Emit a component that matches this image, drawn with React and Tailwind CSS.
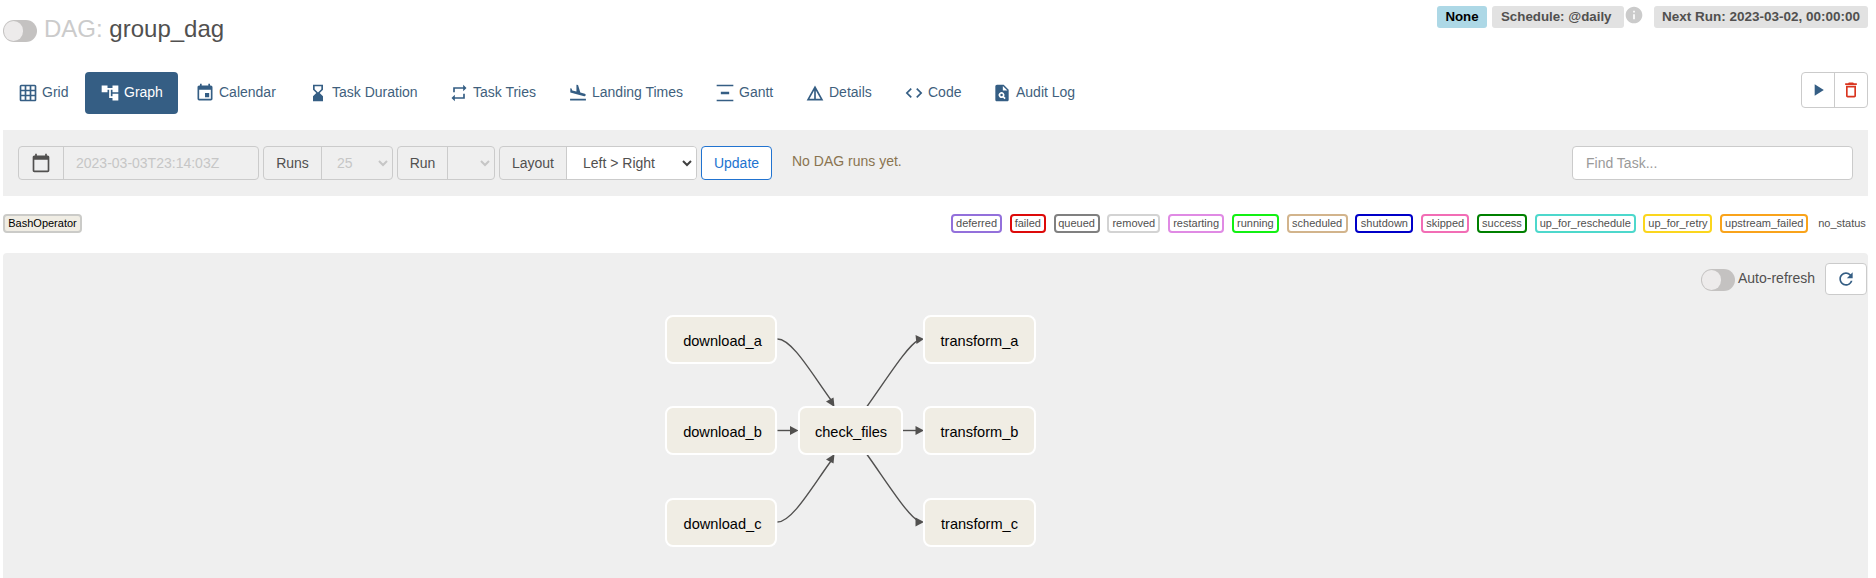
import React from "react";
import {
  MdGridOn, MdAccountTree, MdEvent, MdHourglassBottom, MdRepeat, MdFlightLand,
  MdVerticalDistribute, MdDetails, MdCode, MdPlagiarism, MdPlayArrow,
  MdDeleteOutline, MdRefresh, MdInfo,
} from "react-icons/md";

const tabs = [
  ["Grid", MdGridOn, "w-[80px]"],
  ["Graph", MdAccountTree, "w-[93px]"],
  ["Calendar", MdEvent, "w-[111px]"],
  ["Task Duration", MdHourglassBottom, "w-[139px]"],
  ["Task Tries", MdRepeat, "w-[117px]"],
  ["Landing Times", MdFlightLand, "w-[145px]"],
  ["Gantt", MdVerticalDistribute, "w-[88px]"],
  ["Details", MdDetails, "w-[97px]"],
  ["Code", MdCode, "w-[86px]"],
  ["Audit Log", MdPlagiarism, "w-[113px]"],
];

const states = [
  ["deferred", "w-[51px] border-[#9370db]"],
  ["failed", "w-[36px] border-[#dd0a0a]"],
  ["queued", "w-[46px] border-[#808080]"],
  ["removed", "w-[53px] border-[#d3d3d3]"],
  ["restarting", "w-[56px] border-[#e08ae4]"],
  ["running", "w-[47px] border-[#13f013]"],
  ["scheduled", "w-[61px] border-[#d2b48c]"],
  ["shutdown", "w-[58px] border-[#0000c8]"],
  ["skipped", "w-[48px] border-[#f26db5]"],
  ["success", "w-[50px] border-[#008000]"],
  ["up_for_reschedule", "w-[101px] border-[#4dd8cc]"],
  ["up_for_retry", "w-[69px] border-[#fbd61e]"],
  ["upstream_failed", "w-[88px] border-[#f9a31b]"],
  ["no_status", "w-[52px] border-transparent"],
];

const nodes = [
  ["download_a", "left-[662px] top-[62px] w-[112px] pl-[3px]"],
  ["download_b", "left-[662px] top-[153px] w-[112px] pl-[3px]"],
  ["download_c", "left-[662px] top-[245px] w-[112px] pl-[3px]"],
  ["check_files", "left-[795px] top-[153px] w-[105px] pl-px"],
  ["transform_a", "left-[920px] top-[62px] w-[113px]"],
  ["transform_b", "left-[920px] top-[153px] w-[113px]"],
  ["transform_c", "left-[920px] top-[245px] w-[113px]"],
];

function Toggle() {
  return (
    <span className="flex h-[22px] w-[34px] shrink-0 items-center rounded-full bg-[#c4c2c1] pl-px">
      <span className="h-5 w-[19px] rounded-full bg-[#edebeb]" />
    </span>
  );
}

function CalendarIcon() {
  return (
    <svg width="20" height="20" viewBox="0 0 24 24" fill="currentColor">
      <path d="M20 3h-1V1h-2v2H7V1H5v2H4c-1.100 0-2 .9-2 2v16c0 1.100.9 2 2 2h16c1.100 0 2-.9 2-2V5c0-1.100-.9-2-2-2zm0 18H4V8h16v13z" />
    </svg>
  );
}

function Chevron({ className }) {
  return (
    <svg className={className} width="10" height="7" viewBox="0 0 10 7" fill="none" stroke="currentColor" strokeWidth="2">
      <path d="M1 1l4 4 4-4" />
    </svg>
  );
}

function Field({ label, width, labelWidth, children }) {
  return (
    <div className={`flex h-[34px] overflow-hidden rounded border border-[#cbcbcb] ${width}`}>
      <div className={`flex items-center justify-center border-r border-[#cbcbcb] ${labelWidth}`}>{label}</div>
      {children}
    </div>
  );
}

function Edges() {
  return (
    <svg className="absolute left-0 top-0" width="1100" height="325" viewBox="3 253 1100 325" fill="none" stroke="#51504f" strokeWidth="1.4">
      <path d="M777.5 339C792 339 812 374 831 400" />
      <path d="M777.5 430.5H792" />
      <path d="M777.5 522C792 522 812 487 831 461" />
      <path d="M867 406.5C886 380 908 345 918 340.5" />
      <path d="M903 430.5H918" />
      <path d="M867 454.5C886 481 908 516 918 520.5" />
      <g fill="#51504f" stroke="none">
        <path d="M834.5 407L826 401.5L833.5 397.5Z" />
        <path d="M834.5 454L826 459.5L833.5 463.5Z" />
        <path d="M798.5 430.5L790 426V435Z" />
        <path d="M924 430.5L915.500 426V435Z" />
        <path d="M924 339L915.500 335L916.500 344Z" />
        <path d="M924 522L915.500 517.500V526.500Z" />
      </g>
    </svg>
  );
}

export default function App() {
  return (
    <div className="flex h-[578px] w-[1876px] flex-col overflow-hidden bg-white pl-[3px] pr-2 font-['Liberation_Sans',Arial,sans-serif] text-sm text-[#51504f]">
      <header className="flex h-[72px] items-start justify-between">
        <div className="flex items-center pt-[14px]">
          <span className="mt-1"><Toggle /></span>
          <h1 className="ml-[7px] text-[24px] leading-[30px]">
            <span className="text-[#cbcbcb]">DAG:</span> group_dag
          </h1>
        </div>
        <div className="flex pt-[6px] text-[13.3px] font-bold leading-[21px]">
          <span className="h-[22px] w-[50px] rounded-[3px] bg-[#add8e6] text-center text-black">None</span>
          <span className="ml-[5px] h-[22px] w-[132px] rounded-[3px] bg-[#e2e2e2] pl-[9px]">Schedule: @daily</span>
          <MdInfo className="-mt-px text-[#cbcbcb]" size={20} />
          <span className="ml-[10px] h-[22px] w-[214px] rounded-[3px] bg-[#e2e2e2] text-center text-[13.5px]">Next Run: 2023-03-02, 00:00:00</span>
        </div>
      </header>

      <div className="flex h-[58px] items-start justify-between">
        <nav className="flex gap-[2px]">
          {tabs.map(([name, Icon, width]) => (
            <a key={name} className={`flex h-[42px] items-center rounded pl-[15px] ${width} ${name === "Graph" ? "bg-[#355e84] text-white" : "text-[#3f5f7d]"}`}>
              <Icon size={20} className={name === "Graph" ? "" : "text-[#355e84]"} />
              <span className="ml-1 -mt-[2px] whitespace-nowrap">{name}</span>
            </a>
          ))}
        </nav>
        <div className="flex h-9 w-[67px] rounded border border-[#cbcbcb]">
          <div className="flex w-[33px] items-center justify-center border-r border-[#cbcbcb] text-[#355e84]"><MdPlayArrow size={20} /></div>
          <div className="flex flex-1 items-center justify-center text-[#d9351f]"><MdDeleteOutline size={20} /></div>
        </div>
      </div>

      <section className="flex h-[66px] shrink-0 items-center gap-1 bg-[#efefef] px-[15px]">
        <Field label={<CalendarIcon />} width="w-[241px]" labelWidth="w-[45px]">
          <span className="flex items-center pl-3 text-[#c6c6c6]">2023-03-03T23:14:03Z</span>
        </Field>
        <Field label="Runs" width="w-[130px]" labelWidth="w-[58px]">
          <span className="flex flex-1 items-center justify-between pl-[15px] pr-[4px] text-[#c6c6c6]">25<Chevron /></span>
        </Field>
        <Field label="Run" width="w-[98px]" labelWidth="w-[50px]">
          <span className="flex flex-1 items-center justify-end pr-[4px] text-[#c6c6c6]"><Chevron /></span>
        </Field>
        <Field label="Layout" width="w-[198px]" labelWidth="w-[67px]">
          <span className="flex flex-1 items-center justify-between bg-white pl-[16px] pr-[4px]">Left &gt; Right<Chevron className="text-[#404040]" /></span>
        </Field>
        <button className="h-[34px] w-[71px] rounded border border-[#2173d0] bg-white text-[#2173d0]">Update</button>
        <span className="-mt-[4px] ml-4 text-[#8a7450]">No DAG runs yet.</span>
        <div className="ml-auto flex h-[34px] w-[281px] items-center rounded border border-[#cbcbcb] bg-white pl-[13px] text-[#9a9a9a]">Find Task...</div>
      </section>

      <section className="flex h-[57px] shrink-0 justify-between pt-[18px] text-[11px] leading-[15px]">
        <span className="h-[19px] w-[79px] rounded border-2 border-[#cbcbc8] bg-[#f0ede4] text-center text-black">BashOperator</span>
        <div className="flex gap-[7.770px]">
          {states.map(([name, style]) => (
            <span key={name} className={`flex h-[19px] justify-center whitespace-nowrap rounded border-2 ${style}`}>{name}</span>
          ))}
        </div>
      </section>

      <main className="relative flex-1 rounded-t bg-[#efefef]">
        <div className="flex items-center justify-end pr-px pt-[10px]">
          <span className="mt-[2px]"><Toggle /></span>
          <span className="ml-[3px] -mt-[2px] w-[87px]">Auto-refresh</span>
          <span className="flex h-8 w-[42px] items-center justify-center rounded-sm border border-[#cbcbcb] bg-white text-[#355e84]"><MdRefresh size={20} /></span>
        </div>
        <Edges />
        {nodes.map(([name, place]) => (
          <div key={name} className={`absolute flex h-[49px] items-center justify-center rounded-lg border-2 border-white bg-[#f0ede4] pt-[4px] text-[14.6px] text-black ${place}`}>{name}</div>
        ))}
      </main>
    </div>
  );
}
